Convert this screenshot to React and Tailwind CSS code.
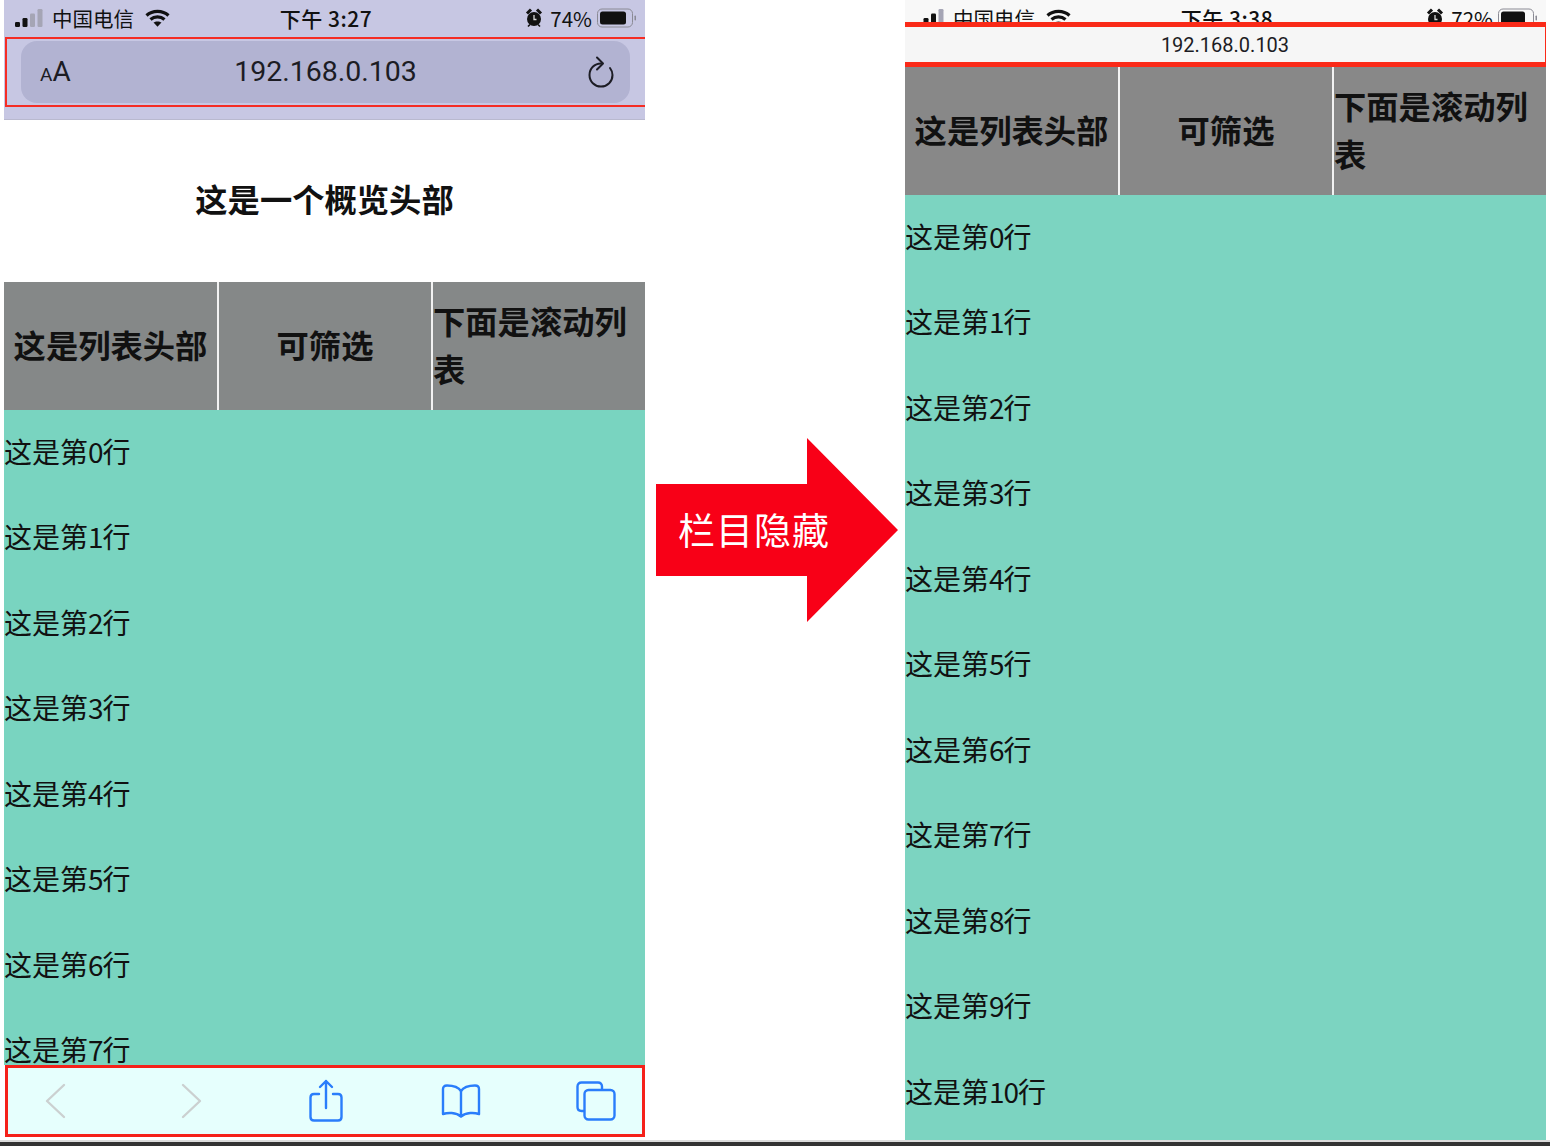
const cjk = "font-['Noto_Sans_CJK_SC','Noto_Sans',sans-serif]";

function Signal({ dark }) {
  const bars = [[0, 13, 5], [7.5, 9, 9], [15, 4.5, 13.5], [22.5, 0, 18]];
  return (
    <svg width="28" height="18" viewBox="0 0 28 18">
      {bars.map((b, i) => (
        <rect key={i} x={b[0]} y={b[1]} width="5" height={b[2]} rx="1.2" fill={i < dark ? '#111' : '#a5a5b5'} />
      ))}
    </svg>
  );
}

function Wifi() {
  return (
    <svg width="25" height="18" viewBox="0 0 25 18" fill="none" stroke="#111" strokeWidth="3.2">
      <path d="M1.5 6.5C7.5 1 17.5 1 23.5 6.5" />
      <path d="M5.5 10.5C9.5 7 15.5 7 19.5 10.5" />
      <path d="M12.5 17.8L8.5 13.6C10.5 12 14.5 12 16.5 13.6Z" fill="#111" stroke="none" />
    </svg>
  );
}

function Alarm() {
  return (
    <svg width="18" height="20" viewBox="0 0 18 20">
      <circle cx="9" cy="11" r="7" fill="#111" />
      <path d="M2 5.5L6 1.5M16 5.5L12 1.5" stroke="#111" strokeWidth="3" />
      <path d="M3 18.5L5 16.5M15 18.5L13 16.5" stroke="#111" strokeWidth="1.6" />
      <path d="M9 7V11.5H11.5" stroke="#d8d8d8" strokeWidth="1.3" fill="none" />
    </svg>
  );
}

function Battery({ fill }) {
  return (
    <svg width="40" height="20" viewBox="0 0 40 20">
      <rect x="0.5" y="1" width="35" height="18" rx="4.5" fill="none" stroke="#8a8a94" />
      <rect x="3" y="3.5" width={fill} height="13" rx="2.5" fill="#111" />
      <rect x="37.5" y="7.5" width="1.5" height="5" rx="0.7" fill="#8a8a94" />
    </svg>
  );
}

function StatusBar({ time, battery, bars, fill }) {
  return (
    <div className="grid h-[37px] shrink-0 grid-cols-3 items-center pl-[11px] pr-[8px] pb-px text-[20.5px] leading-none text-[#111]">
      <div className="flex items-center gap-2">
        <Signal dark={bars} />
        <span className="ml-px mr-[3px]">中国电信</span>
        <Wifi />
      </div>
      <div className="text-center text-[21px] font-medium tracking-[0.5px]">{time}</div>
      <div className="flex items-center justify-end gap-[7px]">
        <Alarm />
        <div className="flex items-center gap-[5px]">
          <span>{battery}</span>
          <Battery fill={fill} />
        </div>
      </div>
    </div>
  );
}

function TableHead({ bg }) {
  return (
    <div className={`grid h-32 shrink-0 grid-cols-[213px_214px_1fr] text-[32.3px] font-bold leading-12 text-[#111] ${bg}`}>
      <div className="flex items-center justify-center pb-1">这是列表头部</div>
      <div className="flex items-center justify-center border-l-2 border-[#f2f2f2] pb-1">可筛选</div>
      <div className="flex items-center border-l-2 border-[#f2f2f2] pb-1">下面是滚动列表</div>
    </div>
  );
}

function Rows({ count }) {
  return (
    <div className="flex-1">
      {Array.from({ length: count }, (_, i) => (
        <div key={i} className="flex h-[85.5px] items-center pb-1 text-[28px] leading-none text-[#111]">
          这是第<span className="tracking-[-1px]">{i}</span>行
        </div>
      ))}
    </div>
  );
}

function Reload() {
  return (
    <svg width="26" height="32" viewBox="0 0 26 32" fill="none" stroke="#1c1c24" strokeWidth="2" strokeLinecap="round" strokeLinejoin="round">
      <path d="M13 7.5C6.5 7.5 1.5 12.5 1.5 19C1.5 25.5 6.5 30.5 13 30.5C19.5 30.5 24.5 25.5 24.5 19C24.5 16.5 23.5 14 22 12" />
      <path d="M9 1.5L15 7.5L9 13.5" />
    </svg>
  );
}

function Chevron({ dir }) {
  return (
    <svg width="40" height="36" viewBox="0 0 40 36" fill="none" stroke="#cbd0d0" strokeWidth="2.4" strokeLinecap="round" strokeLinejoin="round">
      <path d={dir === 'left' ? 'M28 2L11 18L28 34' : 'M12 2L29 18L12 34'} />
    </svg>
  );
}

function Share() {
  return (
    <svg width="40" height="44" viewBox="0 0 40 44" fill="none" stroke="#2a7dfb" strokeWidth="2.4" strokeLinecap="round" strokeLinejoin="round">
      <path d="M13 15H8C5.5 15 4.5 16.5 4.5 18.5V38C4.5 40.5 5.5 41.5 8 41.5H32C34.5 41.5 35.5 40.5 35.5 38V18.5C35.5 16.5 34.5 15 32 15H27" />
      <path d="M20 29V2M14 8L20 2L26 8" />
    </svg>
  );
}

function Book() {
  return (
    <svg width="40" height="36" viewBox="0 0 40 36" fill="none" stroke="#2a7dfb" strokeWidth="2.4" strokeLinecap="round" strokeLinejoin="round">
      <path d="M20 8C17 3.5 13 2.5 6 2.5C3 2.5 2 4 2 6V31C6.5 29.5 15 29 20 33.5C25 29 33.5 29.5 38 31V6C38 4 37 2.5 34 2.5C27 2.5 23 3.5 20 8Z" />
      <path d="M20 8V33" />
    </svg>
  );
}

function Tabs() {
  return (
    <svg width="40" height="40" viewBox="0 0 40 40" fill="none" stroke="#2a7dfb" strokeWidth="2.4" strokeLinecap="round" strokeLinejoin="round">
      <path d="M26 8V5.5C26 3 24.5 1.5 22 1.5H5.5C3 1.5 1.5 3 1.5 5.5V26C1.5 28.5 3 30 5.5 30H8" />
      <rect x="8.5" y="9" width="30" height="29.5" rx="4" />
    </svg>
  );
}

export default function App() {
  return (
    <div className={`flex h-[1146px] w-[1550px] flex-col overflow-hidden bg-white ${cjk}`}>
      <div className="flex h-[1140px] shrink-0 items-start pl-1">
        <section className="flex h-full w-[641px] shrink-0 flex-col">
          <div className="shrink-0 bg-[#c7c7e3]">
            <StatusBar time="下午 3:27" battery="74%" bars={2} fill={26} />
            <div className="ml-px flex h-[70px] items-center border-2 border-r-0 border-[#f52c24] pl-[14px] pr-[15px]">
              <div className="flex h-[62px] flex-1 items-center justify-between rounded-2xl bg-[#b2b3d2] px-4 text-[#1c1c24]">
                <div className="flex w-[40px] items-baseline pl-[3px] font-['Roboto',sans-serif] leading-none">
                  <span className="text-[19px]">A</span>
                  <span className="text-[28px]">A</span>
                </div>
                <span className="font-['Roboto',sans-serif] text-[28.5px] leading-none">192.168.0.103</span>
                <div className="flex w-[40px] justify-end"><Reload /></div>
              </div>
            </div>
            <div className="h-[13px] border-b border-[#b9b9cf]"></div>
          </div>
          <div className="flex h-[162px] shrink-0 items-center justify-center pb-1.5 text-[32.3px] font-bold text-[#111]">
            这是一个概览头部
          </div>
          <div className="flex min-h-0 flex-1 flex-col overflow-hidden bg-[#79d4c0]">
            <TableHead bg="bg-[#858888]" />
            <Rows count={8} />
          </div>
          <div className="ml-px flex h-[72px] shrink-0 items-center justify-between border-[3px] border-[#f5211a] bg-[#e6fffd] pl-[28px] pr-[26px]">
            <div className="flex w-10 justify-center"><Chevron dir="left" /></div>
            <div className="flex w-10 justify-center"><Chevron dir="right" /></div>
            <div className="flex w-10 justify-center"><Share /></div>
            <div className="flex w-10 justify-center"><Book /></div>
            <div className="flex w-10 justify-center"><Tabs /></div>
          </div>
          <div className="h-[3px] shrink-0"></div>
        </section>

        <div className="relative ml-[11px] mr-[7px] mt-[438px] h-[184px] w-[242px] shrink-0">
          <svg width="242" height="184" viewBox="0 0 242 184">
            <path d="M0 46H151V0L242 92L151 184V138H0Z" fill="#f80017" />
          </svg>
          <div className="absolute left-[22px] top-[69px] text-[37px] leading-[44px] tracking-[1px] text-white">
            栏目隐藏
          </div>
        </div>

        <section className="flex h-full w-[641px] shrink-0 flex-col bg-[#7cd4c1]">
          <div className="h-[22px] shrink-0 overflow-hidden bg-[#f8f8f8]">
            <StatusBar time="下午 3:38" battery="72%" bars={3} fill={24} />
          </div>
          <div className="flex h-[45px] shrink-0 items-center justify-center border-y-[5px] border-r border-[#fa2a18] bg-[#f6f6f6] font-['Roboto',sans-serif] text-[20px] leading-none text-[#1c1c24]">
            192.168.0.103
          </div>
          <TableHead bg="bg-[#888888]" />
          <Rows count={11} />
        </section>
      </div>
      <div className="h-0.5 shrink-0 bg-[#dcdcdc]"></div>
      <div className="flex-1 bg-[#333333]"></div>
    </div>
  );
}
